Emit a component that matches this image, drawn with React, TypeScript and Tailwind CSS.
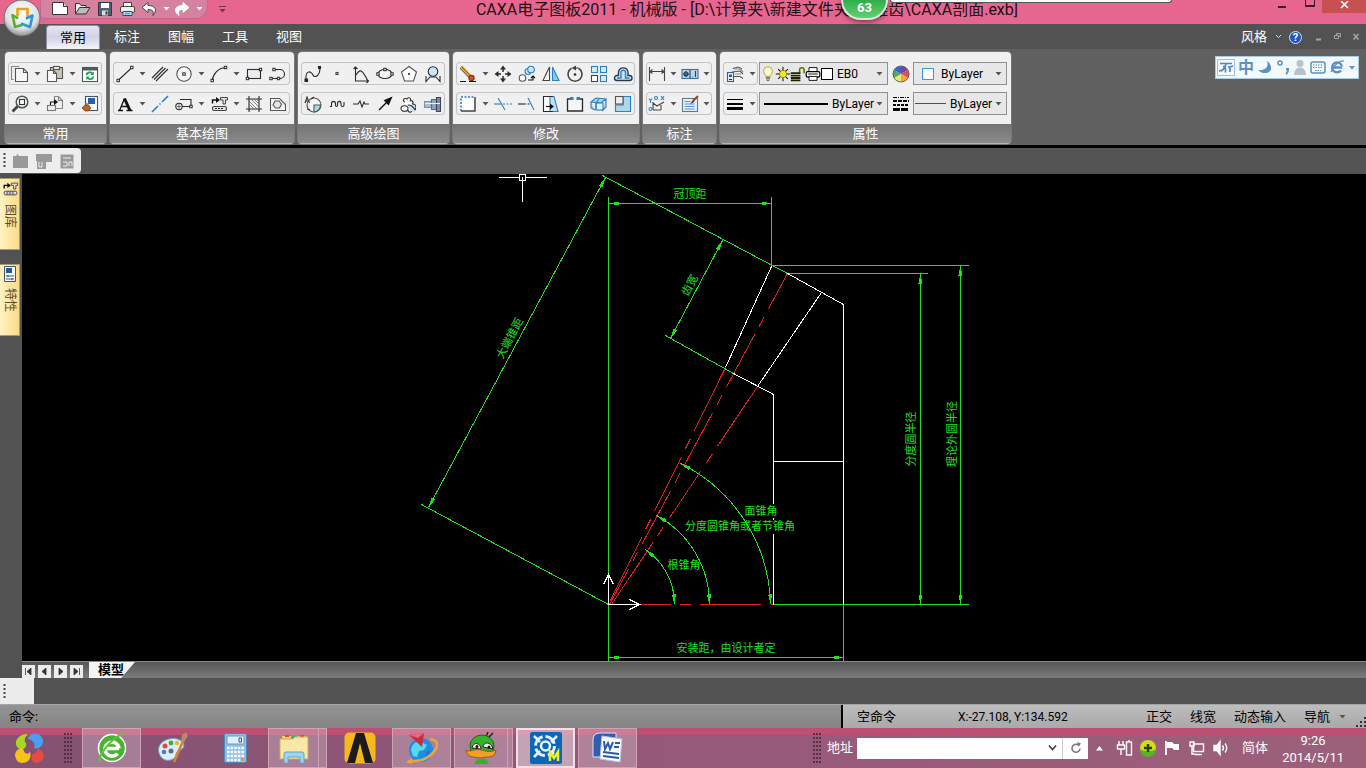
import type { ReactNode } from "react";

const K = "#2b2b2b";
const B = "#2f7fc4";
const L = "#a9d8ef";

function Ic({ children, s = 20 }: { children: ReactNode; s?: number }) {
  return (
    <svg width={s} height={s} viewBox="0 0 20 20" fill="none" stroke={K} strokeWidth="1.1" className="shrink-0" aria-hidden="true">
      {children}
    </svg>
  );
}

const Node = ({ x, y }: { x: number; y: number }) => <rect x={x - 1.2} y={y - 1.2} width="2.4" height="2.4" fill="#fff" strokeWidth="1" />;

const icons: Record<string, ReactNode> = {
  copy: (<><path d="M9.500 2.500h-8v13h2" stroke="#888" /><path d="M5.500 4.500h8l4 4v9h-12z" fill="#f7f7f7" stroke="#555" /><path d="M13.500 4.500v4h4" stroke="#555" /></>),
  paste: (<><rect x="5.500" y="3.500" width="12" height="11" fill="#c9c4b4" stroke="#555" /><rect x="8.500" y="2.500" width="6" height="3" fill="#eee" stroke="#555" /><path d="M2.500 6.500h6l3 3v8h-9z" fill="#fafafa" stroke="#555" /><path d="M8.500 6.500v3h3" stroke="#555" /></>),
  refresh: (<><rect x="2.500" y="3.500" width="15" height="14" fill="#fff" stroke="#4b5a5a" /><path d="M2.500 5h15" stroke="#4b5a5a" strokeWidth="3" /><path d="M6.500 11a3.500 3.500 0 0 1 6-1.500M13.500 12.500a3.500 3.500 0 0 1-6 1.500" stroke="#18a050" strokeWidth="1.800" /><path d="M13.800 7.500v3.500h-3.500zM6.300 16v-3.500h3.500z" fill="#18a050" stroke="none" /></>),
  zoom: (<><circle cx="12" cy="8" r="5.800" fill="#e9f3f8" stroke="#555" strokeWidth="1.500" /><rect x="9.500" y="5.500" width="5" height="5" stroke="#333" fill="#fff" /><path d="M7.500 12.500l-5 5" stroke="#444" strokeWidth="2.800" /></>),
  match: (<><path d="M9.500 2.500h4l4 4v8h-8z" fill="#eee" stroke="#888" /><path d="M13.500 2.500v4h4" stroke="#888" /><rect x="2.500" y="11.500" width="8" height="5" fill="#eee" stroke="#777" /><path d="M5.500 11V8h4" stroke="#111" /><path d="M9 5l4 3-4 3z" fill="#111" stroke="none" /></>),
  brush: (<><rect x="5.500" y="2.500" width="12" height="14" fill="#fff" stroke="#456" /><rect x="8" y="4" width="7" height="6" fill="#2a5fa8" stroke="none" /><path d="M9 12l-3-3" stroke="#999" strokeWidth="2" /><path d="M2 14c3-4 6-4 9 0-2 4-6 4-9 0z" fill="#b9651f" stroke="#7a3d0a" strokeWidth=".8" /></>),
  line: (<><path d="M3 16.500L17 3.500" /><Node x={3.200} y={16.500} /><Node x={16.800} y={3.500} /></>),
  parallel: <path d="M2 14L13 3M6 17L18 5M4 15.500L15.500 4" />,
  circle: (<><circle cx="10" cy="10" r="7.200" fill="#fafafa" stroke="#555" /><Node x={10} y={10} /></>),
  arc: (<><path d="M3 17C4 10 9 4 16.500 3.500" /><Node x={3.200} y={16.500} /><Node x={16.500} y={3.500} /></>),
  rect: (<><rect x="3.500" y="5.500" width="13" height="9" fill="#e8ecf0" /><Node x={3.500} y={14.500} /><Node x={16.500} y={5.500} /></>),
  pline: (<><path d="M3 14.500h9M6 5.500h6a4.500 4.500 0 0 1 0 9" /><Node x={3} y={14.500} /><Node x={10.500} y={14.500} /><Node x={6} y={5.500} /></>),
  text: <><path d="M3 16.500h5M11.500 16.500h6M4.500 16.500L9.500 4.500M6.500 12.500h7" strokeWidth="1.300" stroke="#111" /><path d="M9.500 4.500L15 16.500" strokeWidth="3" stroke="#111" /></>,
  center: <path d="M2 18l6-6M9.500 10.500l1-1M12 8l6-6" stroke={B} strokeWidth="1.600" />,
  block: (<><path d="M6 5.500h11v7H7" /><circle cx="5" cy="12.500" r="3.200" fill="#eee" /><path d="M5 10v5M3 12.500h4" strokeWidth=".6" /><Node x={17} y={12.500} /></>),
  lib: (<><path d="M3.500 9.500V6H8" stroke="#111" strokeWidth="1.500" /><path d="M7 3l4 3-4 3z" fill="#111" stroke="none" /><path d="M11.500 3.500h7v2.500h-2v4h-2.500V6h-2.500z" fill="#e4e4e4" stroke="#444" strokeWidth="1" /><rect x="3.500" y="12.500" width="14" height="4" rx="1.500" fill="#ddd" stroke="#444" /><path d="M6 14.500h9" strokeDasharray="2 1" /></>),
  hatch: (<><path d="M5 2v16M15 2v16M2 5h16M2 15h16" /><path d="M5 7l8 8M5 10l5 5M7 5l8 8M10 5l5 5M12.500 5L15 7.500" strokeWidth=".7" stroke="#555" /></>),
  donut: (<><path d="M2.500 4.500h9l6 6v6h-15z" fill="#f6f6f6" stroke="#555" /><path d="M7 7h4l2.500 3-2 4h-4L5 11z" fill="#e2e7ec" stroke="#555" /></>),
  spline: (<><path d="M3 16.500C2 4 9 8 10 11s7 2 7-7.500" /><rect x="2" y="15" width="2.500" height="2.500" fill="#111" /><rect x="15.500" y="2.500" width="2" height="2" fill="#111" /></>),
  point: <rect x="9" y="8.500" width="2" height="2" stroke="#444" />,
  func: (<><path d="M4.500 3v14h13M2.500 5l2-2 2 2M15.500 15l2 2-2 2" /><path d="M5 11C10 3 12 8 16 15" /></>),
  ellipse: (<><ellipse cx="10" cy="10" rx="7" ry="4.500" fill="#f6f6f6" /><Node x={3} y={10} /><Node x={10} y={5.500} /><Node x={17} y={10} /></>),
  polygon: (<><path d="M10 2.500l7.500 5.500-3 9h-9l-3-9z" fill="#fafafa" stroke="#555" /><path d="M9 10h2M10 9v2" /></>),
  detail: (<><circle cx="10" cy="7.500" r="4.800" fill="#c8e6f7" /><path d="M3 12v5.500l4-4.500h6l4 4.500V12" /></>),
  formula: (<><circle cx="11" cy="11" r="7" fill="#f2f5f7" stroke="#555" /><path d="M11 11h6.500a7 7 0 0 1-6.500 7z" fill="#a8dce8" stroke="#555" /><path d="M2 9l2-6 2.500 6M3 7h3M8 5l3-2M4 15l3 1" stroke="#333" /></>),
  wave: <path d="M3 12.500h1.500V10C4.500 6.500 8.500 6.500 8.500 10v1c0 2 2 2 2 0v-1c0-3.500 3.500-3.500 3.500 0v1c0 2 3 2 3 0V8" />,
  breakl: <path d="M2 10h5l2-3 2 6 2-5 1 2h4" />,
  arrow: (<><path d="M4 16L12 8" stroke="#111" strokeWidth="1.400" /><path d="M16.500 3.500l-3 7-4-4z" fill="#111" stroke="#111" /></>),
  gear: (<><path d="M6 8c-3-1-1-5 2-3 2-3 5 0 3 2 3-1 4 2 2 3 3 0 5 2 2 3 3 1 1 5-2 3 0 3-4 3-4 0" fill="#fff" /><path d="M8 11h8v7l-4-1z" fill="#c5e3ee" stroke="none" /><ellipse cx="5.500" cy="14.500" rx="3.500" ry="2.800" fill="#fff" /><path d="M9 11c3 0 5 1 7 5" /></>),
  shaft: (<><path d="M1.500 7.500h7v6h-7z" fill="#a4bbd1" stroke="#7b91a8" /><path d="M8.500 5.500h5v10h-5z" fill="#8ea6bf" stroke="#5a6c80" /><path d="M13.500 3.500h4v14h-4z" fill="#7890ad" stroke="#445" /><path d="M2 9.500h15" stroke="#e9f2fa" /></>),
  erase: (<><path d="M3 3l9 9.500" stroke="#d9b15a" strokeWidth="4" /><path d="M3.500 2.500l9 9.500M2 4l9 9.500" stroke="#5a4116" strokeWidth=".8" /><circle cx="13.500" cy="14" r="2.600" fill="#d4542a" stroke="#8c2f10" /><path d="M2 17.500h6M11 17.500h7" stroke="#111" /></>),
  move: (<><path d="M10 1.500l3 4H7zM10 18.500l3-4H7zM1.500 10l4-3v6zM18.500 10l-4-3v6z" fill={K} stroke="none" /><path d="M10 5v3M10 12v3M5 10h3M12 10h3" strokeWidth="1.500" /></>),
  copyrot: (<><circle cx="5.500" cy="14" r="3.300" fill="#fff" stroke="#555" /><circle cx="11" cy="7.500" r="3" fill="#cbe6f7" stroke={B} /><circle cx="14" cy="5.500" r="3.300" fill="#cbe6f7" stroke={B} /><path d="M11 16h5v-3M14 14l2-2 2 2" stroke="#111" /></>),
  mirror: (<><path d="M8.500 3v13.500H2z" fill="#fff" stroke="#444" /><path d="M11.500 3v13.500H18z" fill="#8ec8ee" stroke={B} /></>),
  rotate: (<><path d="M6.500 4.200a7 7 0 1 0 7 0" strokeWidth="1.600" stroke="#444" /><path d="M9 4h4.500" stroke="#444" /><path d="M11 1.500v5L6.500 4z" fill="#444" stroke="none" /><circle cx="10" cy="10.500" r="1.300" fill={K} stroke="none" /></>),
  array: (<><rect x="2.500" y="2.500" width="6" height="6" fill="#d8edf9" stroke={B} /><rect x="11.500" y="2.500" width="6" height="6" fill="#d8edf9" stroke={B} /><rect x="2.500" y="11.500" width="6" height="6" fill="#fff" stroke="#444" /><rect x="11.500" y="11.500" width="6" height="6" fill="#d8edf9" stroke={B} /></>),
  offset: (<><path d="M4 16.500h12.500a2.500 2.500 0 0 0 0-5H15V8A4.800 4.800 0 0 0 5.500 8v3.500H4a2.500 2.500 0 0 0 0 5z" fill="#cbe6f7" stroke="#2b3a4a" strokeWidth="1.400" /><path d="M4 14h4V8a2.300 2.300 0 0 1 4.500 0v6h4" stroke={B} strokeWidth="1.400" /></>),
  stretch: (<><path d="M3 3h13v14H3z" fill="#fff" stroke="none" /><path d="M3 17V3h14" stroke={B} strokeDasharray="2 1.500" strokeWidth="1.600" /><path d="M3 17h14V3" stroke="#444" strokeWidth="1.500" /></>),
  trim: (<><path d="M5 4l7 12" stroke={B} /><path d="M1 10h7" stroke={B} /><path d="M10 10h9" stroke={B} strokeDasharray="2 1.500" /></>),
  extend: (<><path d="M11 4l6 12" stroke={B} /><path d="M1 10h6" stroke="#222" /><path d="M7 10h6" stroke="#222" strokeDasharray="2 1.500" /></>),
  scale: (<><path d="M2.500 2.500h6v15h-6z" fill="#fff" stroke="none" /><path d="M9 2.500h4l4 15h-8z" fill="#bfe1f2" stroke={B} /><path d="M12 2.500H2.500v15H12" /><path d="M5 12.500h5" stroke="#111" /><path d="M9 9.500l4 3-4 3z" fill="#111" stroke="none" /></>),
  brk: (<><path d="M6 5H2.500v12h15V5H14" strokeWidth="1.300" fill="#f5f5f5" /><path d="M5 4.500h3.500M11.500 4.500H15" stroke={B} strokeWidth="3" /></>),
  explode: (<><path d="M2 8l5-4 10 1-5 4zM2 8v6l4 2M17 5v8l-4 4" fill={L} stroke={B} /><rect x="7" y="9" width="7" height="7" fill="#dff1fa" stroke={B} /><path d="M7 16V9M10 5l-3 4" stroke={B} /></>),
  fillet: (<><path d="M10 2.500h7.500v15H2.500V11H10z" fill={L} stroke={B} /><rect x="2.500" y="2.500" width="7.500" height="7.500" fill="#eee" stroke="#555" /></>),
  dim: <path d="M2.500 3v14M17.500 3v14M3 7.500h14M5.500 5.500L3 7.500l2.500 2M14.500 5.500l2.500 2-2.500 2" stroke="#444" />,
  tol: (<><rect x="2" y="5.500" width="16" height="9" fill="#b9d4ec" stroke="#3c6fa5" /><circle cx="6" cy="10" r="2" stroke="#245" /><path d="M3 10h6M6 7v6M10 6v8M12.500 13h.5M15.500 7v6" stroke="#245" /></>),
  coord: (<><path d="M6 8v8M6 16h8M6 9l4 3 7-4M14 11v5" stroke="#444" /><path d="M2 4.500l1.500 2L5 4.500M3.500 6.500v2.500M14 2l3 4M17 2l-3 4" stroke={B} /><circle cx="9" cy="4" r="1.500" stroke={B} /><circle cx="3.500" cy="15" r="1.500" stroke={B} /></>),
  edit: (<><rect x="2.500" y="4.500" width="15" height="13" fill="#e5f0fa" stroke="#678" /><path d="M4.500 7.500h6M4.500 10h10M4.500 12.500h10M4.500 15h10" stroke="#5b93c9" strokeWidth="1" /><path d="M18 2l-5 5" stroke="#8c4a2a" strokeWidth="2" /><path d="M13 6l-3 4 4-2z" fill="#333" stroke="none" /></>),
  layers: (<><path d="M8 4.500l5-1.500 4 2M7 8l8-1 3 3M9 12.500h6l3 2" stroke="#555" /><path d="M9 5h6l3 3M10 10h6" stroke="#888" /><rect x="2.500" y="8.500" width="6" height="9" fill="#e6f2fb" stroke="#36618c" /><rect x="4" y="10.500" width="3" height="2.500" fill="#2a5fa8" stroke="none" /><path d="M4 15.500h3" /></>),
  lw: (<><path d="M2 5.500h16" stroke="#000" strokeWidth="1" /><path d="M2 10h16" stroke="#000" strokeWidth="2" /><path d="M2 14.500h16" stroke="#000" strokeWidth="3" /></>),
  lt: (<><path d="M2 3.500h16" stroke="#000" strokeDasharray="4 1 1 1" /><path d="M2 7h16" stroke="#000" strokeWidth="2" strokeDasharray="4 1" /><path d="M2 11h16" stroke="#000" strokeWidth="2" strokeDasharray="3 1" /><path d="M2 15.500h16" stroke="#000" strokeWidth="3" strokeDasharray="7 1" /></>),
  bulb: (<><path d="M7 14h6M7.500 16h5M8.500 18h3" stroke="#444" /><path d="M7.500 13c0-2-3-3-3-6.500a5.500 5.500 0 0 1 11 0c0 3.500-3 4.500-3 6.500z" fill="#fdfbd0" stroke="#a0a030" /></>),
  sun: (<><path d="M10 1v18M1 10h18M4 4l12 12M16 4L4 16" stroke="#111" strokeWidth="1.300" /><circle cx="10" cy="10" r="4.500" fill="#f4ee20" stroke="#8a8a00" /></>),
  lock: (<><path d="M12 9V5a2.800 2.800 0 0 1 5.600 0v4" stroke="#6b6b00" strokeWidth="2" /><path d="M1 9h12M1 12h12M1 15h12M1 18h12" stroke="#222200" strokeWidth="2.200" /></>),
  printer: (<><path d="M5 7V2h10v5" fill="#fff" stroke="#000" /><rect x="1.500" y="7" width="17" height="7" rx="2" fill="#fff" stroke="#000" strokeWidth="1.500" /><path d="M5 13h10v5H5z" fill="#fff" stroke="#000" /><path d="M4 10h12" stroke="#000" /></>),
  wheel: (<><path d="M10 10V2a8 8 0 0 1 7 4z" fill="#8e35a8" stroke="none" /><path d="M10 10l7-4a8 8 0 0 1 0 8z" fill="#e0523c" stroke="none" /><path d="M10 10l7 4a8 8 0 0 1-7 4z" fill="#f4a63a" stroke="none" /><path d="M10 10v8a8 8 0 0 1-7-4z" fill="#f3e36a" stroke="none" /><path d="M10 10l-7 4a8 8 0 0 1 0-8z" fill="#55ab52" stroke="none" /><path d="M10 10L3 6a8 8 0 0 1 7-4z" fill="#3b66cf" stroke="none" /><circle cx="10" cy="10" r="8" stroke="#666" strokeWidth="1" /></>),
};

const Caret = ({ className = "text-[#555]" }: { className?: string }) => (
  <svg width="7" height="4" viewBox="0 0 7 4" className={`shrink-0 ${className}`} aria-hidden="true">
    <path d="M0.500 0h6L3.500 3.600z" fill="currentColor" />
  </svg>
);

function Tool({ name, label, drop, narrow }: { name: string; label: string; drop?: boolean; narrow?: boolean }) {
  return (
    <>
      <button type="button" aria-label={label} className={`flex h-[23px] items-center justify-center ${narrow ? "w-[22px]" : "w-6"}`}>
        <Ic>{icons[name]}</Ic>
      </button>
      {drop && (
        <button type="button" aria-label={`${label} 选项`} className="flex h-[23px] w-[11px] items-center justify-center">
          <Caret />
        </button>
      )}
    </>
  );
}

type T = [string, string, boolean?];

function Row({ tools, narrow }: { tools: T[]; narrow?: boolean }) {
  return (
    <div className="flex h-[23px] rounded-sm ring-1 ring-[#c2c5c5] ring-inset">
      {tools.map(([n, l, d]) => (
        <Tool key={n} name={n} label={l} drop={d} narrow={narrow} />
      ))}
    </div>
  );
}

function Panel({ title, children }: { title: string; children: ReactNode }) {
  return (
    <section className="flex h-[92px] shrink-0 flex-col rounded-sm border-b border-[#b4b4b4] bg-[#f0f0f0] shadow-[0_0_0_1px_#777]">
      <div className="flex flex-1 flex-col gap-[7px] pt-[10px] pr-1 pl-[3px]">{children}</div>
      <h2 className="h-[19px] bg-gradient-to-b from-[#737373] to-[#8b8b8b] text-center text-[13px] leading-[19px] text-white">{title}</h2>
    </section>
  );
}

const panels: { title: string; rows: T[][]; narrow?: boolean }[] = [
  { title: "常用", rows: [[["copy", "复制", true], ["paste", "粘贴", true], ["refresh", "刷新"]], [["zoom", "缩放", true], ["match", "匹配", true], ["brush", "格式刷"]]] },
  { title: "基本绘图", rows: [[["line", "直线", true], ["parallel", "平行线"], ["circle", "圆", true], ["arc", "圆弧", true], ["rect", "矩形"], ["pline", "多段线"]], [["text", "文字", true], ["center", "中心线"], ["block", "块", true], ["lib", "图库", true], ["hatch", "剖面线"], ["donut", "填充"]]] },
  { title: "高级绘图", rows: [[["spline", "样条"], ["point", "点"], ["func", "公式曲线"], ["ellipse", "椭圆"], ["polygon", "正多边形"], ["detail", "局部放大"]], [["formula", "圆弧拟合"], ["wave", "波浪线"], ["breakl", "双折线"], ["arrow", "箭头"], ["gear", "齿轮"], ["shaft", "孔轴"]]] },
  { title: "修改", rows: [[["erase", "删除", true], ["move", "平移"], ["copyrot", "平移复制"], ["mirror", "镜像"], ["rotate", "旋转"], ["array", "阵列"], ["offset", "等距线"]], [["stretch", "拉伸", true], ["trim", "裁剪"], ["extend", "延伸"], ["scale", "缩放"], ["brk", "打断"], ["explode", "分解"], ["fillet", "过渡"]]] },
  { title: "标注", narrow: true, rows: [[["dim", "尺寸标注", true], ["tol", "公差", true]], [["coord", "坐标标注", true], ["edit", "标注编辑", true]]] },
];

const box = "relative flex h-[23px] items-center border border-[#8f8f8f] bg-[#e7e7e7] text-xs text-black";
const sel = "min-w-0 flex-1 appearance-none bg-transparent outline-none";

function Properties() {
  return (
    <Panel title="属性">
      <div className="flex h-[23px] items-center">
        <div className="flex rounded-sm ring-1 ring-[#c2c5c5] ring-inset"><Tool name="layers" label="图层" drop /></div>
        <div className={`${box} ml-px w-[129px] pr-1 pl-0`}>
          {["bulb", "sun", "lock", "printer"].map((n) => (
            <span key={n} className="flex w-[15px] justify-center"><Ic s={16}>{icons[n]}</Ic></span>
          ))}
          <span className="mx-px size-3 border border-black bg-white" />
          <select aria-label="当前图层" className={`${sel} pl-[3px]`}><option>EB0</option></select>
          <Caret />
        </div>
        <div className="flex w-[25px] justify-center"><Tool name="wheel" label="颜色" narrow /></div>
        <div className={`${box} w-[94px] pr-1 pl-2`}>
          <span className="size-3 border border-[#3d94e0] bg-white" />
          <select aria-label="颜色" className={`${sel} pl-[7px]`}><option>ByLayer</option></select>
          <Caret />
        </div>
      </div>
      <div className="flex h-[23px] items-center">
        <div className="flex rounded-sm ring-1 ring-[#c2c5c5] ring-inset"><Tool name="lw" label="线宽" drop /></div>
        <div className={`${box} ml-px w-[129px] pr-1 pl-1`}>
          <span className="h-0.5 w-16 bg-black" />
          <select aria-label="线宽" className={`${sel} pl-1`}><option>ByLayer</option></select>
          <Caret />
        </div>
        <div className="flex w-[25px] justify-center"><Tool name="lt" label="线型" narrow /></div>
        <div className={`${box} w-[94px] pr-1 pl-px`}>
          <span className="h-px w-[31px] bg-[#d01818]" />
          <select aria-label="线型" className={`${sel} pl-1`}><option>ByLayer</option></select>
          <Caret />
        </div>
      </div>
    </Panel>
  );
}

function Logo() {
  return (
    <svg width="38" height="38" viewBox="0 0 38 38" aria-hidden="true">
      <defs>
        <radialGradient id="orb" cx=".5" cy=".35" r=".65"><stop offset="0" stopColor="#fff" /><stop offset=".7" stopColor="#dcdfe2" /><stop offset="1" stopColor="#8d9296" /></radialGradient>
      </defs>
      <circle cx="19" cy="19" r="18" fill="url(#orb)" stroke="#6d6d6d" />
      <g fill="none" strokeWidth="2.600" strokeLinejoin="round">
        <path d="M14.500 17.500V10h10v7.500" stroke="#f0a018" />
        <path d="M15 19.500L9.500 16l2.500 12 7-2" stroke="#58b030" />
        <path d="M23 19.500l6.500-3-2.500 11.500-9-3.500" stroke="#2f96d8" />
      </g>
    </svg>
  );
}

function TitleBar() {
  return (
    <header className="relative flex h-6 items-start bg-[#e6668f]">
      <div className="flex w-[228px] shrink-0 items-center">
        <div className="ml-10 flex h-[19px] w-[168px] items-center rounded-br-xl rounded-bl-sm border border-t-0 border-[#c4678a] bg-[#d4829f] pl-[10px]">
          <button type="button" aria-label="新建" className="w-[23px]"><svg width="18" height="16" viewBox="0 0 18 16"><path d="M1.500 1.500h11l4 4v8h-15z" fill="#fff" stroke="#333" /><path d="M12.500 1.500v4h4" fill="#ddd" stroke="#333" /></svg></button>
          <button type="button" aria-label="打开" className="w-[23px]"><svg width="18" height="16" viewBox="0 0 18 16"><path d="M1.500 12.500v-10h4l1.500 2h5v2" fill="#f0f0f0" stroke="#333" /><path d="M1.500 13l4-6.500h10.500l-4 6.500z" fill="#bbb" stroke="#333" /></svg></button>
          <button type="button" aria-label="保存" className="w-[22px]"><svg width="16" height="16" viewBox="0 0 16 16"><path d="M1.500 1.500h13v13h-13z" fill="#4f6272" stroke="#2c3a45" /><path d="M4 2h8v5H4z" fill="#fff" /><path d="M5 9.500h6v5H5z" fill="#ddd" /><path d="M8.500 10.500h2v3h-2z" fill="#333" /></svg></button>
          <button type="button" aria-label="打印" className="w-[22px]"><svg width="17" height="16" viewBox="0 0 17 16"><path d="M4.500 5V1.500h8V5" fill="#fff" stroke="#444" /><rect x="1.500" y="5.500" width="14" height="6" rx="1.500" fill="#eee" stroke="#444" /><path d="M4 10.500h9v4H4z" fill="#fff" stroke="#444" /><path d="M5.500 12.500h6" stroke="#2ab0e0" strokeWidth="2" /></svg></button>
          <button type="button" aria-label="撤销" className="w-[18px]"><svg width="17" height="16" viewBox="0 0 17 16"><path d="M7 1.500L1 6.500l6 5V8.500c4 0 6 1 5 6 5-6 2-10-5-10z" fill="#fff" stroke="#444" /></svg></button>
          <span className="flex w-[14px] justify-center"><Caret className="text-white" /></span>
          <button type="button" aria-label="重做" className="w-[20px]"><svg width="17" height="16" viewBox="0 0 17 16"><path d="M10 1.500l6 5-6 5V8.500c-4 0-5 1-4 6C-1 9 3 4.500 10 4.500z" fill="#fff" stroke="#fff" /></svg></button>
          <span className="flex w-[12px] justify-center"><Caret className="text-white" /></span>
        </div>
        <button type="button" aria-label="自定义快速启动" className="mb-1 ml-2.5 flex w-2 flex-col items-center gap-0.5 pt-1"><span className="h-px w-[7px] bg-[#6b3a4c]" /><Caret className="text-[#6b3a4c]" /></button>
      </div>
      <h1 className="flex-1 text-center text-[16px] leading-5 whitespace-pre text-[#221015]">CAXA电子图板2011 - 机械版 - [D:\计算夹\新建文件夹\圆锥齿\CAXA剖面.exb]</h1>
      <div className="flex w-[100px] shrink-0 items-start">
        <button type="button" aria-label="最小化" className="flex h-3 w-8 justify-center"><span className="mt-1.5 h-0.5 w-2 bg-[#3a1c26]" /></button>
        <button type="button" aria-label="最大化" className="flex h-3 w-6 justify-center"><span className="h-[7px] w-2.5 border border-t-0 border-b-2 border-[#3a1c26]" /></button>
        <button type="button" aria-label="关闭" className="flex h-[13px] w-11 items-center justify-center bg-[#c75050] pb-1"><svg width="9" height="8" viewBox="0 0 9 8"><path d="M1 0l7 7M8 0L1 7" stroke="#fff" strokeWidth="1.600" /></svg></button>
      </div>
      <div className="absolute top-0 left-[890px] h-[3px] w-[282px] rounded-b-sm border border-t-0 border-[#555] bg-white" />
      <div className="absolute top-0 left-[841px] flex h-5 w-[47px] items-start justify-center rounded-b-full border-2 border-t-0 border-[#d8ead8] bg-gradient-to-b from-[#2fae4c] to-[#63cf72] text-[13px] leading-4 font-bold text-white shadow-[0_2px_5px_rgba(0,0,0,.45)]">63</div>
    </header>
  );
}

function Tabs() {
  return (
    <nav className="flex h-[25px] items-end bg-[#525252] text-[13px] text-white">
      <div className="ml-[46px] flex h-6 items-stretch">
        {["常用", "标注", "图幅", "工具", "视图"].map((t, i) => (
          <button type="button" key={t} className={i === 0 ? "w-[54px] rounded-t border border-b-0 border-[#8d90a0] bg-gradient-to-b from-[#e4e5f0] via-[#cfd3e4] to-[#f4f5fa] text-black" : "w-[54px]"}>{t}</button>
        ))}
      </div>
      <div className="mr-1.5 mb-1 ml-auto flex items-center">
        <button type="button" className="leading-4">风格</button>
        <svg width="22" height="6" viewBox="0 0 22 6" aria-hidden="true"><path d="M9 1l2.500 2.500L14 1" fill="none" stroke="#ddd" /></svg>
        <button type="button" aria-label="帮助" className="flex size-[13px] items-center justify-center rounded-full border border-[#cfe0ff] bg-[#1d55c8] text-[11px] leading-none font-bold">?</button>
        <svg width="58" height="12" viewBox="0 0 58 12" fill="none" stroke="#a5a5b0" aria-hidden="true"><path d="M14 8.500h5" strokeWidth="2" /><path d="M32.500 4.500h4v3h-4zM34.500 4V2.500h4v3H37" /><path d="M51.500 3l5 5.500M56.500 3l-5 5.500" strokeWidth="1.600" /></svg>
      </div>
    </nav>
  );
}

function ImeBar() {
  return (
    <div className="mt-1 mr-[7px] ml-auto flex h-[23px] w-36 shrink-0 items-center border border-[#a9cbe4] bg-[#f4f9fd] text-[#5b92c2]">
      <svg width="20" height="19" viewBox="0 0 20 19" fill="none" stroke="#4a8ac2" aria-hidden="true"><path d="M1.500 1.500h17v16h-17z" stroke="#9dc0de" /><path d="M4 5.500h12M3 13c4 0 6-3 7-7M7 8.500c3 0 3 5 2 6M12 9c2 0 3 0 5-1M14 9v5" strokeWidth="1.700" /></svg>
      <span className="ml-0.5 text-[16px] leading-5 font-bold">中</span>
      <svg width="104" height="19" viewBox="0 0 104 19" fill="none" stroke="#5b92c2" aria-hidden="true">
        <path d="M13 3c2 5-1 10-9 9 4 5 14 4 13-3-.5-3-2-5-4-6z" fill="#5b92c2" stroke="none" />
        <circle cx="26" cy="5" r="2" strokeWidth="1.500" /><path d="M32 11h2c0 3-.5 4-2 5" strokeWidth="2" />
        <g fill="#b5c3d0" stroke="none"><circle cx="46" cy="5.500" r="3.500" /><path d="M40 17c0-10 12-10 12 0z" /></g>
        <rect x="57" y="4" width="14" height="11" rx="2" strokeWidth="1.500" /><path d="M59 7h10M59 9.500h10M61 12.500h6" strokeDasharray="1.500 1" />
        <path d="M88 8.500a5 5 0 1 0-1 4M79 9.500h9" strokeWidth="2.300" /><path d="M77 14c3-7 9-12 13-11" strokeWidth="1.200" />
        <path d="M95 8h6l-3 3.500z" fill="#5b92c2" stroke="none" />
      </svg>
    </div>
  );
}

const Dots = () => <svg width="3" height="15" viewBox="0 0 3 15" aria-hidden="true"><path d="M1.500 0v15" stroke="#444" strokeWidth="2" strokeDasharray="2 2" /></svg>;

function SideTab({ label, children }: { label: string; children: ReactNode }) {
  return (
    <button type="button" className="flex h-[72px] w-5 flex-col items-center gap-1.5 border border-l-0 border-[#a99a6c] bg-gradient-to-r from-[#fff2c4] to-[#fbdc85] pt-px text-[12px] leading-[14px] text-[#5a4c28]">
      {children}
      <span className="[text-orientation:sideways] [writing-mode:vertical-rl]">{label}</span>
    </button>
  );
}

function Arrow({ x, y, a }: { x: number; y: number; a: number }) {
  return <path d="M0 0L-10 -2V2z" transform={`translate(${x} ${y}) rotate(${a})`} fill="#20e020" stroke="none" />;
}

function Drawing() {
  return (
    <svg className="block h-full w-full" role="img" aria-label="锥齿轮剖面图">
      <g transform="translate(-21.5 -173.5)" fill="none" strokeWidth="1" shapeRendering="crispEdges">
        <g stroke="#e02020">
          <path d="M725 367L608 604" strokeDasharray="71 9 11 9 60 9 11 9" />
          <path d="M787 273L609 604" strokeDasharray="60 9 11 9" strokeDashoffset="20" />
          <path d="M757 386L611 604" strokeDasharray="72 9 11 9 57 12 10 8 80 0" />
          <path d="M639 604h31M679 604h11M699 604h61M770 604h3" />
        </g>
        <g stroke="#20e020">
          <path d="M608 196V661M608 203H771M771 196V265M602 175L787 273M605 177L428 507M421 504L608 604M722 240L670 338M665 335L733 373" />
          <path d="M771 265H968M787 273H927M920 273V604M960 265V604M773 604H968M843 604V661M608 657H843" />
          <path d="M674 604A66 66 0 0 0 645 549M709 604A101 101 0 0 0 656 515M770 604A161 161 0 0 0 680 463" />
        </g>
        <g stroke="#fff">
          <path d="M771 266L725 367M821 292L757 386M787 273L843 304V604M733 373L773 394V503M773 517V519M773 533V604M773 461H843" />
          <path d="M608 604H639M629 599L639 604L629 609M608 604V574M603 584L608 574L613 584" />
          <path d="M498 177H519M525 177H546M522 180V201M519 174H525V180H519zM522 176v3" />
        </g>
        <Arrow x={608} y={203} a={180} /><Arrow x={771} y={203} a={0} />
        <Arrow x={608} y={657} a={180} /><Arrow x={843} y={657} a={0} />
        <Arrow x={605} y={177} a={-62} /><Arrow x={428} y={507} a={118} />
        <Arrow x={722} y={240} a={-62} /><Arrow x={670} y={338} a={118} />
        <Arrow x={920} y={273} a={-90} /><Arrow x={920} y={604} a={90} />
        <Arrow x={960} y={265} a={-90} /><Arrow x={960} y={604} a={90} />
        <Arrow x={674} y={604} a={86} /><Arrow x={709} y={604} a={87} /><Arrow x={770} y={604} a={88} />
        <Arrow x={645} y={549} a={220} /><Arrow x={656} y={515} a={210} /><Arrow x={680} y={463} a={208} />
      </g>
      <g transform="translate(-22 -174)" fill="#20e020" fontSize="11" textAnchor="middle">
        <text x="690" y="198">冠顶距</text>
        <text x="761" y="515">面锥角</text>
        <text x="740" y="530">分度圆锥角或者节锥角</text>
        <text x="684" y="569">根锥角</text>
        <text x="726" y="652">安装距，由设计者定</text>
        <text transform="translate(915 439) rotate(-90)">分度圆半径</text>
        <text transform="translate(956 434) rotate(-90)">理论外圆半径</text>
        <text transform="translate(513 340) rotate(-62)">大端锥距</text>
        <text transform="translate(693 287) rotate(-62)">齿宽</text>
      </g>
    </svg>
  );
}

const navPaths = ["M3.500 3v7M9 3L5 6.500 9 10z", "M8 3L4 6.500 8 10z", "M5 3l4 3.500L5 10z", "M9.500 3v7M4 3l4 3.500L4 10z"];

function SheetTabs() {
  return (
    <div className="flex h-[17px] bg-[#525252] pl-[22px]">
      <div className="flex flex-1 items-end gap-[3px] border-t border-[#8a8a8a] bg-gradient-to-b from-[#565656] to-[#7b7b7b]">
        {navPaths.map((d, i) => (
          <button type="button" key={d} aria-label={["首页", "上一页", "下一页", "末页"][i]} className="size-[13px] bg-[#ececec]"><svg width="13" height="13" viewBox="0 0 13 13"><path d={d} fill="#333" stroke="#333" strokeWidth=".8" /></svg></button>
        ))}
        <button type="button" className="ml-[3px] h-4 w-[46px] bg-[#f4f4f4] pr-0.5 text-[13px] leading-4 font-bold text-black [clip-path:polygon(0_0,100%_0,70%_100%,0_100%)]">模型</button>
      </div>
    </div>
  );
}

function StatusBar() {
  return (
    <div className="flex h-6 border-t border-[#a5a5a5] bg-gradient-to-b from-[#939393] to-[#858585] text-[13px] text-black">
      <label className="flex flex-1 items-center gap-1 border-r-2 border-black pl-[9px]">命令:<input className="min-w-0 flex-1 bg-transparent outline-none" /></label>
      <div className="flex w-[523px] items-center bg-gradient-to-b from-[#bdbdbd] to-[#a9a9a9] pl-[14px]">
        <span className="w-[101px]">空命令</span>
        <span className="w-[188px] text-xs">X:-27.108, Y:134.592</span>
        <div className="flex gap-[18px]">
          {["正交", "线宽", "动态输入", "导航"].map((t) => <button type="button" key={t}>{t}</button>)}
        </div>
        <span className="ml-[9px]"><Caret className="text-[#555]" /></span>
        <svg width="10" height="11" viewBox="0 0 10 11" className="mt-auto ml-auto" aria-hidden="true"><path d="M0 9h10M4 5h6M8 1h2" stroke="#333" strokeWidth="2" strokeDasharray="2 2" /></svg>
      </div>
    </div>
  );
}

const Grip = () => (
  <svg width="8" height="30" viewBox="0 0 8 30" className="shrink-0" aria-hidden="true">
    <path d="M1 0v30M4 0v30M7 0v30" stroke="#4b2638" strokeWidth="2" strokeDasharray="2 2" strokeOpacity=".8" />
  </svg>
);

const apps: Record<string, ReactNode> = {
  start: (<><path d="M12 2C1 3-1 15 6 17c5 1 7-3 6-6-2-1-2-6 2-8z" fill="#a8d820" /><path d="M14 7c1-7 13-7 15 1 1 6-5 10-9 8 2-4-1-8-6-9z" fill="#4a9df0" /><path d="M1 22c2-6 8-7 9-3 1 4 6 3 6 0 2 8-2 12-8 12-4 0-7-4-7-9z" fill="#f5c21a" /><path d="M18 22c1 0 4 0 6-5 8 2 7 13-1 14-4 0-6-3-5-9z" fill="#e34d44" /></>),
  ie: (<><circle cx="16" cy="16" r="13.500" fill="#45b52c" stroke="#fff" strokeWidth="1.500" /><path d="M23 16.500H9.500M23 16.500a7 7 0 1 0-1.500 5" fill="none" stroke="#fff" strokeWidth="3.600" /><path d="M4 30C1 24 18 3 28 2" fill="none" stroke="#5bc53b" strokeWidth="2.200" /></>),
  paint: (<><path d="M2 21C-1 10 12 5 20 7s9 9 3 11-2 6-7 9S4 28 2 21z" fill="#dcecf8" stroke="#7ba2c4" /><circle cx="8" cy="14" r="2.500" fill="#e24b30" /><circle cx="14" cy="11" r="2.400" fill="#3fae3f" /><circle cx="20" cy="11" r="2.200" fill="#f0b429" /><circle cx="7" cy="20" r="2.300" fill="#3e7fd0" /><circle cx="14" cy="19" r="2.500" fill="#5b6f85" /><path d="M27 7L17 30" stroke="#d98234" strokeWidth="2.600" /><path d="M25 3l4-3 2 4-4 6-3-1z" fill="#b58b66" /></>),
  calc: (<><rect x="5.500" y="1.500" width="22" height="29" rx="1.500" fill="#8fbfe5" stroke="#4f88b8" /><rect x="8" y="4" width="17" height="8" fill="#dff0fa" stroke="#6e9cc0" /><path d="M20 6h2.500v4H20z" fill="none" stroke="#456" /><path d="M8 16h17M8 20h17M8 24h17M8 28h17" stroke="#f4f9fd" strokeWidth="2.600" strokeDasharray="2.600 1" /><path d="M22 26h3v3h-3z" fill="#f09030" /></>),
  folder: (<><path d="M4 4h24v18H4z" fill="#e9cf78" /><path d="M7 3h4v2H7zM22 3h4v2h-4z" fill="#e24b30" /><path d="M13 4h6v3h-6z" fill="#3fae8f" /><path d="M2 7h13l2-2h13v22H2z" fill="#fbe8a6" stroke="#d0ad52" /><path d="M6 31v-9q0-2 2-2h16q2 0 2 2v9h-4v-6H10v6z" fill="#9fd4ee" stroke="#5aa7cf" /></>),
  ansys: (<><rect x=".5" y=".5" width="31" height="31" rx="5" fill="#f6b91c" /><path d="M12 1h8l9 30h-8L16 11l-5 20H3z" fill="#1b1b1b" /></>),
  nx: (<><circle cx="15" cy="18" r="12" fill="#1e8fe0" /><path d="M5 18c1-7 6-9 10-8l6 3-3 5-5 1-2 6-4-1z" fill="#5fd6ee" /><path d="M20 20l4-2-1 6-4 2z" fill="#2f6fd8" /><path d="M3 3l15-2-2 14z" fill="#cf2a3c" /><path d="M3 3l15-2-6 5z" fill="#e8697a" /><path d="M24 7c14 2 5 16-8 21L2 30" fill="none" stroke="#eda43c" strokeWidth="2.600" /><path d="M6 26L0 30l6 2z" fill="#eda43c" /></>),
  duck: (<><path d="M20 7l3-7M22 7l6-6" stroke="#222" strokeWidth="1.500" /><ellipse cx="17" cy="14" rx="12" ry="11" fill="#35b12a" stroke="#1a6a14" /><path d="M7 16c1-7 9-5 9 1zM18 15c0-5 8-6 10 2z" fill="#fff" stroke="#222" /><circle cx="12" cy="14.500" r="1.500" fill="#111" /><circle cx="24" cy="15" r="1.500" fill="#111" /><path d="M1 18c4 3 8-2 15 0s10 2 15 0c-1 9-8 6-15 8-7-1-14 0-15-8z" fill="#f0a028" stroke="#a05a10" /><path d="M12 27h9l3 5H9z" fill="#35b12a" /></>),
  caxa: (<><rect x="0" y="0" width="32" height="32" rx="2" fill="#0b68b8" /><circle cx="15" cy="14" r="9.500" fill="none" stroke="#e9f6ff" strokeWidth="3" strokeDasharray="12 3" /><circle cx="15.500" cy="14" r="4.500" fill="none" stroke="#e9f6ff" strokeWidth="2.500" /><path d="M4 4l6 6M27 4l-6 6M4 25l6-6M20 19l4 3" stroke="#e9f6ff" strokeWidth="2.500" /><path d="M20 29v-9l4 6 4-6v9" fill="none" stroke="#f4ee20" strokeWidth="2.500" /></>),
  word: (<><path d="M1 25V8q0-7 7-7h16v24z" fill="#2f5fae" stroke="#dbe7f6" /><path d="M10 4l20 3-2 23-20-3z" fill="#fafcff" stroke="#b7c7dd" /><path d="M12 9l1 8 3-6 2 6 3-7" fill="none" stroke="#2b5aa8" strokeWidth="2" /><path d="M23 11h5M22 15h5M11 20l16 2M11 24l16 2" stroke="#2b5aa8" strokeWidth="2" /></>),
};

function App32({ name }: { name: string }) {
  return <svg width="32" height="32" viewBox="0 0 32 32" fill="none" aria-hidden="true">{apps[name]}</svg>;
}

const taskItems: { name: string; label: string; cls: string; stack?: string }[] = [
  { name: "ie", label: "浏览器", cls: "ml-[10px] w-[59px] border border-[#cfa3b6] bg-white/25" },
  { name: "paint", label: "画图", cls: "ml-px w-[62px]" },
  { name: "calc", label: "计算器", cls: "w-[62px]" },
  { name: "folder", label: "资源管理器", cls: "ml-[2px] w-[51px] border border-[#cfa3b6] bg-white/25", stack: "w-2 border border-l-0 border-[#cfa3b6] bg-white/25" },
  { name: "ansys", label: "ANSYS", cls: "ml-px w-16" },
  { name: "nx", label: "NX", cls: "w-[59px] border border-[#cfa3b6] bg-white/25" },
  { name: "duck", label: "下载", cls: "ml-[3px] w-[54px] border border-[#cfa3b6] bg-white/25", stack: "w-[5px] border border-l-0 border-[#cfa3b6] bg-white/25" },
  { name: "caxa", label: "CAXA", cls: "ml-[3px] w-[59px] border-2 border-[#f3dfe7] bg-white/45" },
  { name: "word", label: "Word", cls: "ml-[3px] w-[59px] border border-[#cfa3b6] bg-white/25" },
];

function Taskbar() {
  return (
    <footer className="flex h-10 items-center bg-[linear-gradient(to_bottom,#bb4f74_0,#bb4f74_7px,transparent_7px),linear-gradient(to_right,#835171,#97597a_50%,#9d6079)] text-[13px] text-white">
      <button type="button" aria-label="开始" className="ml-[14px] w-[50px]"><App32 name="start" /></button>
      <Grip />
      {taskItems.map((t) => (
        <div key={t.name} className="flex h-10 items-stretch">
          <button type="button" aria-label={t.label} className={`flex items-center justify-center ${t.cls}`}><App32 name={t.name} /></button>
          {t.stack && <span className={t.stack} />}
        </div>
      ))}
      <div className="ml-auto flex items-center">
        <Grip />
        <label htmlFor="addr" className="mr-1 ml-1.5">地址</label>
        <div className="flex h-[21px] w-[231px] items-center bg-white">
          <input id="addr" className="min-w-0 flex-1 text-black outline-none" />
          <svg width="18" height="8" viewBox="0 0 18 8" aria-hidden="true"><path d="M5 1.500l3.500 4L12 1.500" fill="none" stroke="#444" strokeWidth="1.800" /></svg>
          <button type="button" aria-label="刷新" className="flex h-full w-[26px] items-center justify-center border-l border-[#ccc]"><svg width="12" height="12" viewBox="0 0 12 12"><path d="M10 6.500A4 4 0 1 1 8 2.800" fill="none" stroke="#777" strokeWidth="1.500" /><path d="M7 0l4 1.500L8.500 5z" fill="#777" /></svg></button>
        </div>
        <svg width="146" height="18" viewBox="0 0 146 18" fill="none" stroke="#fff" strokeWidth="1.400" aria-hidden="true">
          <path d="M8 11.500h7L11.500 7z" fill="#fff" stroke="none" />
          <path d="M31 2v4M35 2v4M29.500 6h7v4h-7zM33 10v6" /><rect x="38.500" y="3" width="5" height="13" /><path d="M40 2h2" />
          <circle cx="60" cy="9" r="8" fill="#d8d81c" stroke="none" /><path d="M52 10a8 8 0 0 0 16 0c-4 3-12 3-16 0z" fill="#53b52a" stroke="none" /><path d="M56 9h8M60 5v8" stroke="#174a10" strokeWidth="2.500" />
          <path d="M78 2v14" strokeWidth="1.800" /><path d="M79 3h5l2 2h5v6h-5l-2-2h-5z" fill="#fff" stroke="none" />
          <rect x="105.500" y="5" width="10" height="7.500" /><path d="M107 15.500h7M102 3h4v4h-4zM104 7v8h3" />
          <path d="M126 6.500h3l3-4v13l-3-4h-3z" fill="#fff" /><path d="M134.500 6.500q2 2.500 0 5M137 4.500q3.500 4.500 0 9" />
        </svg>
        <span className="ml-2">简体</span>
        <div className="mr-[22px] ml-[14px] pt-0.5 text-center leading-[17px]"><div>9:26</div><div>2014/5/11</div></div>
      </div>
    </footer>
  );
}

export default function App() {
  return (
    <div className="flex min-h-screen flex-col overflow-x-hidden bg-[#525252] font-[Roboto,'Noto_Sans_CJK_SC',sans-serif]">
      <div className="relative">
        <TitleBar />
        <button type="button" aria-label="菜单" className="absolute top-[-1px] left-[3px] z-10"><Logo /></button>
        <Tabs />
      </div>
      <div className="flex items-start gap-1 border-b-[3px] border-black bg-[#616161] pt-[3px] pb-px pl-[5px]">
        {panels.map((p) => (
          <Panel key={p.title} title={p.title}>
            {p.rows.map((r, i) => <Row key={i} tools={r} narrow={p.narrow} />)}
          </Panel>
        ))}
        <Properties />
        <ImeBar />
      </div>
      <div className="h-[26px] bg-[#545454]">
        <div className="flex h-[25px] w-[81px] items-center rounded-r bg-[#ededed] pl-[3px]">
          <Dots />
          <svg width="68" height="18" viewBox="0 0 68 18" fill="#999" aria-hidden="true"><path d="M7 4h3l1.500-2L13 4h9v12H7zM30 2h16v8h-6v7h-9V9h-1z" /><path d="M33 10v5h3v-5M54 2h14v15H54z" stroke="#eee" /><path d="M57 6h8M57 10h4v4h-4M63 14v-4h3v4" stroke="#eee" fill="none" /></svg>
        </div>
      </div>
      <main className="flex flex-1 bg-black">
        <aside className="flex w-[22px] shrink-0 flex-col gap-[14px] bg-[#525252] pt-1">
          <SideTab label="图库"><Ic s={18}>{icons.lib}</Ic></SideTab>
          <SideTab label="特性"><svg width="12" height="16" viewBox="0 0 12 16"><path d="M.5.500h11v15H.5z" fill="#f4f8fb" stroke="#456" /><path d="M2 2h6v5H2z" fill="#235a9c" /><path d="M2 10h8M2 13h8M4 9v2M8 12v2" stroke="#456" /></svg></SideTab>
        </aside>
        <div className="min-h-[487px] min-w-0 flex-1"><Drawing /></div>
      </main>
      <SheetTabs />
      <div className="h-[26px] bg-[#525252]"><div className="flex h-full w-[34px] items-center bg-[#ececec] pl-[3px]"><Dots /></div></div>
      <StatusBar />
      <Taskbar />
    </div>
  );
}
